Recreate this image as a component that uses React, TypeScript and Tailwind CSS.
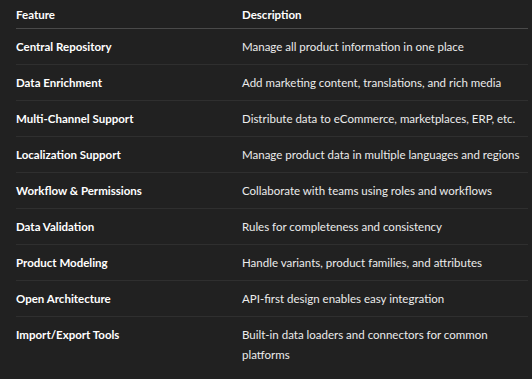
const rows: [string, string][] = [
  ["Central Repository", "Manage all product information in one place"],
  ["Data Enrichment", "Add marketing content, translations, and rich media"],
  ["Multi-Channel Support", "Distribute data to eCommerce, marketplaces, ERP, etc."],
  ["Localization Support", "Manage product data in multiple languages and regions"],
  ["Workflow & Permissions", "Collaborate with teams using roles and workflows"],
  ["Data Validation", "Rules for completeness and consistency"],
  ["Product Modeling", "Handle variants, product families, and attributes"],
  ["Open Architecture", "API-first design enables easy integration"],
  ["Import/Export Tools", "Built-in data loaders and connectors for common platforms"],
];

export default function App() {
  return (
    <div
      className="w-[532px] h-[379px] overflow-hidden bg-[#212121] text-white pl-4 pr-1"
      style={{ fontFamily: 'Lato, "Open Sans", sans-serif' }}
    >
      <table className="w-full border-collapse text-[11.5px] leading-5">
        <thead>
          <tr className="border-b border-[#4a4a4a]">
            <th className="w-[226px] text-left font-bold pt-[5px] pb-[3px]">Feature</th>
            <th className="text-left font-bold pt-[5px] pb-[3px]">Description</th>
          </tr>
        </thead>
        <tbody>
          {rows.map(([f, d], i) => (
            <tr key={f} className={i < rows.length - 1 ? "border-b border-[#2f2f2f]" : ""}>
              <td className="align-top font-bold pt-2 pb-[7px]">{f}</td>
              <td className="align-top text-[#ececec] pt-2 pb-[7px] pr-[6px]">{d}</td>
            </tr>
          ))}
        </tbody>
      </table>
    </div>
  );
}
